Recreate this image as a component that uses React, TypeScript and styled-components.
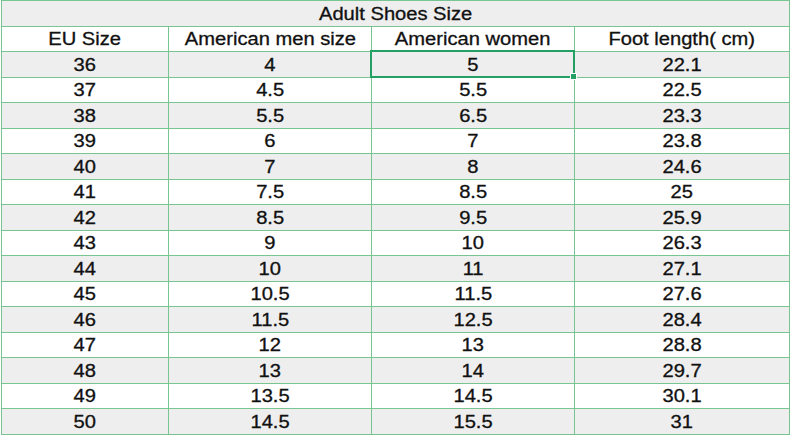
import React from 'react'
import styled, { createGlobalStyle } from 'styled-components'

const rows: [string, string, string, string][] = [
  ['36', '4', '5', '22.1'],
  ['37', '4.5', '5.5', '22.5'],
  ['38', '5.5', '6.5', '23.3'],
  ['39', '6', '7', '23.8'],
  ['40', '7', '8', '24.6'],
  ['41', '7.5', '8.5', '25'],
  ['42', '8.5', '9.5', '25.9'],
  ['43', '9', '10', '26.3'],
  ['44', '10', '11', '27.1'],
  ['45', '10.5', '11.5', '27.6'],
  ['46', '11.5', '12.5', '28.4'],
  ['47', '12', '13', '28.8'],
  ['48', '13', '14', '29.7'],
  ['49', '13.5', '14.5', '30.1'],
  ['50', '14.5', '15.5', '31'],
]

const headers = ['EU Size', 'American men size', 'American women', 'Foot length( cm)']

const App: React.FC = () => {
  return (
    <Sheet>
      <GlobalStyle />
      <SizeTable>
        <colgroup>
          <col style={{ width: 167 }} />
          <col style={{ width: 203 }} />
          <col style={{ width: 203 }} />
          <col style={{ width: 215 }} />
        </colgroup>
        <tbody>
          <Row $shaded>
            <Cell colSpan={4}>
              <Text>Adult Shoes Size</Text>
            </Cell>
          </Row>
          <Row>
            {headers.map((h) => (
              <Cell key={h}>
                <Text>{h}</Text>
              </Cell>
            ))}
          </Row>
          {rows.map((r, i) => (
            <Row key={r[0]} $shaded={i % 2 === 0}>
              {r.map((v, j) => (
                <Cell key={j}>
                  <Text>{v}</Text>
                  {i === 0 && j === 2 && (
                    <Selection>
                      <Handle />
                    </Selection>
                  )}
                </Cell>
              ))}
            </Row>
          ))}
        </tbody>
      </SizeTable>
    </Sheet>
  )
}

const GlobalStyle = createGlobalStyle`
  html, body {
    margin: 0;
    padding: 0;
    background: #ffffff;
  }
  body {
    font-family: "Liberation Sans", Arial, sans-serif;
  }
`

const Sheet = styled.div`
  width: 794px;
  height: 439px;
  overflow: hidden;
  padding-left: 1px;
  box-sizing: border-box;
  background: #ffffff;
`

const SizeTable = styled.table`
  border-collapse: collapse;
  table-layout: fixed;
  width: 788px;
`

const Row = styled.tr<{ $shaded?: boolean }>`
  height: 25.5px;
  background: ${(p) => (p.$shaded ? '#eeeeee' : '#ffffff')};
`

const Cell = styled.td`
  position: relative;
  padding: 0;
  border: 1px solid #78c592;
  text-align: center;
  vertical-align: middle;
  line-height: 20px;
  white-space: nowrap;
`

const Text = styled.span`
  display: inline-block;
  font-size: 17.5px;
  color: #111111;
  -webkit-text-stroke: 0.3px #111111;
  transform: scaleX(1.15) translateY(1px);
`

const Selection = styled.span`
  position: absolute;
  left: -2px;
  top: -2px;
  right: -1px;
  bottom: -1px;
  border: 2px solid #22a163;
  pointer-events: none;
`

const Handle = styled.span`
  position: absolute;
  right: -4px;
  bottom: -4px;
  width: 5px;
  height: 5px;
  background: #22a163;
  border: 1px solid #ffffff;
`

export default App
